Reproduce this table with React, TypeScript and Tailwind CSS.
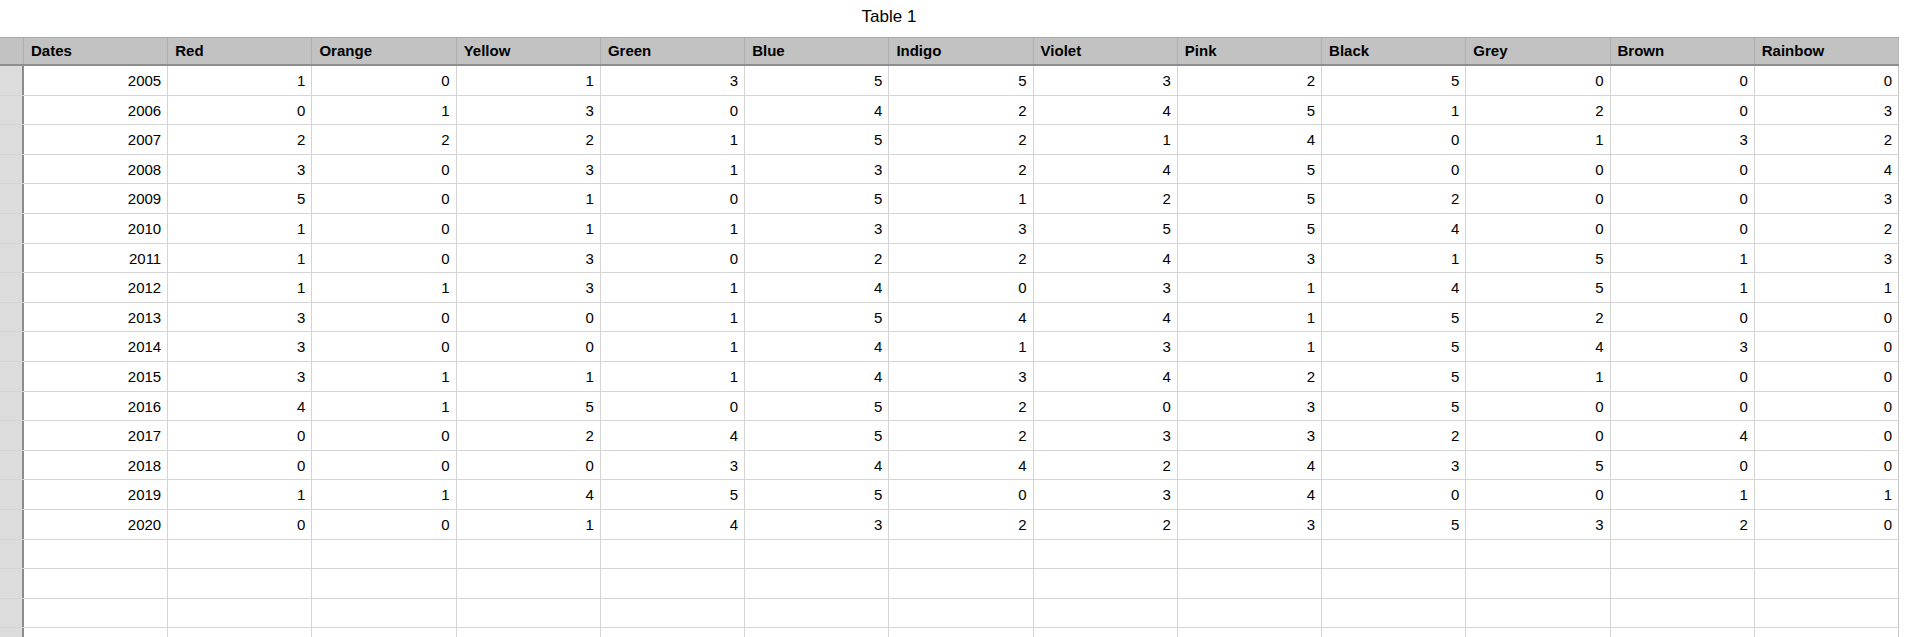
const columns = [
  "Dates",
  "Red",
  "Orange",
  "Yellow",
  "Green",
  "Blue",
  "Indigo",
  "Violet",
  "Pink",
  "Black",
  "Grey",
  "Brown",
  "Rainbow",
];

const rows: [number, number[]][] = [
  [2005, [1, 0, 1, 3, 5, 5, 3, 2, 5, 0, 0, 0]],
  [2006, [0, 1, 3, 0, 4, 2, 4, 5, 1, 2, 0, 3]],
  [2007, [2, 2, 2, 1, 5, 2, 1, 4, 0, 1, 3, 2]],
  [2008, [3, 0, 3, 1, 3, 2, 4, 5, 0, 0, 0, 4]],
  [2009, [5, 0, 1, 0, 5, 1, 2, 5, 2, 0, 0, 3]],
  [2010, [1, 0, 1, 1, 3, 3, 5, 5, 4, 0, 0, 2]],
  [2011, [1, 0, 3, 0, 2, 2, 4, 3, 1, 5, 1, 3]],
  [2012, [1, 1, 3, 1, 4, 0, 3, 1, 4, 5, 1, 1]],
  [2013, [3, 0, 0, 1, 5, 4, 4, 1, 5, 2, 0, 0]],
  [2014, [3, 0, 0, 1, 4, 1, 3, 1, 5, 4, 3, 0]],
  [2015, [3, 1, 1, 1, 4, 3, 4, 2, 5, 1, 0, 0]],
  [2016, [4, 1, 5, 0, 5, 2, 0, 3, 5, 0, 0, 0]],
  [2017, [0, 0, 2, 4, 5, 2, 3, 3, 2, 0, 4, 0]],
  [2018, [0, 0, 0, 3, 4, 4, 2, 4, 3, 5, 0, 0]],
  [2019, [1, 1, 4, 5, 5, 0, 3, 4, 0, 0, 1, 1]],
  [2020, [0, 0, 1, 4, 3, 2, 2, 3, 5, 3, 2, 0]],
];

const gridCols = "grid grid-cols-[24px_repeat(13,minmax(0,1fr))]";

function RowHeader() {
  return <div className="bg-[#dcdcdc] border-r-2 border-[#8c8c8c]" />;
}

function Cell({ value }: { value?: number }) {
  return (
    <div className="flex items-center justify-end border-r border-[#d3d3d3] pt-[2px] pr-[6px] last:border-[#c8c8c8]">
      {value}
    </div>
  );
}

export default function App() {
  return (
    <div
      className="w-[1920px] h-[637px] overflow-hidden bg-white text-black"
      style={{ fontFamily: '"Liberation Sans", Arial, sans-serif' }}
    >
      <div className="flex h-[37px] w-[1778px] justify-center pt-[4px] text-[17px]">
        Table 1
      </div>

      <div className="w-[1899px] text-[15px]">
        {/* header */}
        <div
          className={`${gridCols} h-[29px] border-t border-b-2 border-t-[#a9a9a9] border-b-[#8e8e8e] bg-[#c1c2c1] font-bold`}
        >
          <div className="border-r border-[#acadac]" />
          {columns.map((c) => (
            <div
              key={c}
              className="flex items-center border-r border-[#adaead] pt-[1px] pl-[7px] last:border-[#b8b8b8]"
            >
              {c}
            </div>
          ))}
        </div>

        {/* data rows */}
        {rows.map(([year, values]) => (
          <div key={year} className={`${gridCols} h-[29.6px] border-b border-[#d4d4d4]`}>
            <RowHeader />
            <Cell value={year} />
            {values.map((v, i) => (
              <Cell key={i} value={v} />
            ))}
          </div>
        ))}

        {/* empty rows */}
        {[0, 1, 2, 3].map((r) => (
          <div key={`e${r}`} className={`${gridCols} h-[29.6px] border-b border-[#d4d4d4]`}>
            <RowHeader />
            {columns.map((c) => (
              <Cell key={c} />
            ))}
          </div>
        ))}
      </div>
    </div>
  );
}
